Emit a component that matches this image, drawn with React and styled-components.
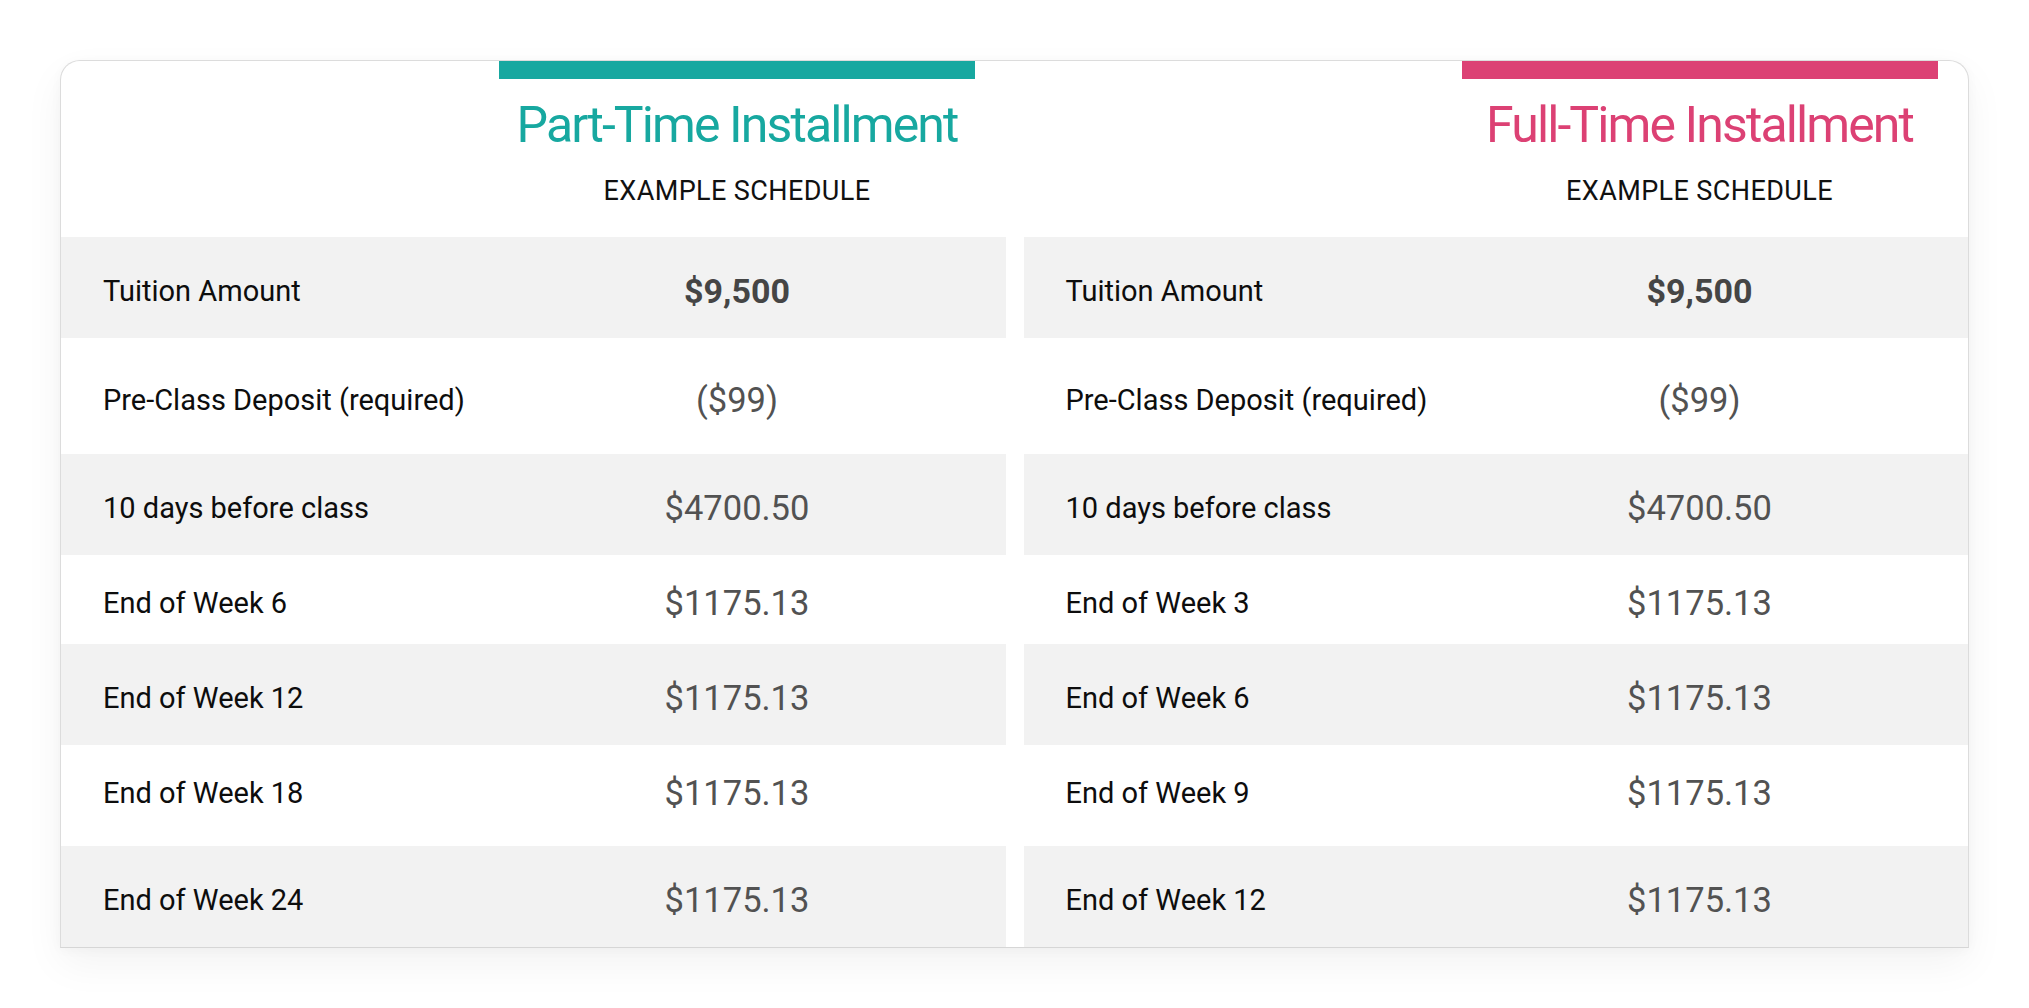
import React from "react";
import styled, { createGlobalStyle } from "styled-components";

const GlobalStyle = createGlobalStyle`
  html, body {
    margin: 0;
    padding: 0;
    background: #ffffff;
    font-family: Roboto, "Liberation Sans", sans-serif;
  }
`;

const Page = styled.div`
  width: 2029px;
  height: 1008px;
  box-sizing: border-box;
  padding: 60px 0 0 60px;
  background: #ffffff;
`;

const Card = styled.div`
  width: 1909px;
  box-sizing: border-box;
  display: grid;
  grid-template-columns: 1fr 1fr;
  column-gap: 18px;
  background: #ffffff;
  border: 1px solid #dcdcdc;
  border-bottom-color: #d6d6d6;
  border-radius: 20px 20px 0 0;
  box-shadow: 0 16px 40px rgba(0, 0, 0, 0.05), 0 2px 12px rgba(0, 0, 0, 0.03);
  overflow: hidden;
`;

const Panel = styled.div`
  display: flex;
  flex-direction: column;
`;

const Header = styled.div`
  display: grid;
  grid-template-columns: 438px 476px 1fr;
  height: 176px;
`;

const HeadCol = styled.div`
  grid-column: 2;
  display: flex;
  flex-direction: column;
  align-items: center;
`;

const Bar = styled.div`
  align-self: stretch;
  height: 18px;
  background: ${(p) => p.$color};
`;

const Title = styled.h2`
  margin: 21px 0 0;
  font-family: Roboto, "Liberation Sans", sans-serif;
  font-weight: 400;
  font-size: 50px;
  line-height: 50px;
  letter-spacing: -1.9px;
  color: ${(p) => p.$color};
  white-space: nowrap;
`;

const Subtitle = styled.div`
  margin-top: 27px;
  font-size: 27px;
  line-height: 28px;
  color: #111111;
  letter-spacing: 0.4px;
  white-space: nowrap;
`;

const Row = styled.div`
  display: grid;
  grid-template-columns: 438px 476px 1fr;
  align-items: center;
  box-sizing: border-box;
  height: ${(p) => p.$h}px;
  padding-top: ${(p) => p.$pt || 0}px;
  padding-bottom: ${(p) => p.$pb || 0}px;
  background: ${(p) => (p.$shaded ? "#f2f2f2" : "#ffffff")};
`;

const Label = styled.div`
  padding-left: 42px;
  font-size: 29px;
  color: #0d0d0d;
  white-space: nowrap;
`;

const Value = styled.div`
  text-align: center;
  font-size: ${(p) => (p.$bold ? 34 : 34.5)}px;
  font-weight: ${(p) => (p.$bold ? 700 : 400)};
  color: ${(p) => (p.$bold ? "#454545" : "#525252")};
  white-space: nowrap;
`;

const rowMetrics = [
  { h: 101, pt: 7 },
  { h: 116, pt: 8 },
  { h: 101, pt: 7 },
  { h: 89, pt: 7 },
  { h: 101, pt: 7 },
  { h: 101, pb: 5 },
  { h: 101, pt: 7 },
];

const plans = [
  {
    title: "Part-Time Installment",
    color: "#17a8a0",
    rows: [
      ["Tuition Amount", "$9,500", true],
      ["Pre-Class Deposit (required)", "($99)"],
      ["10 days before class", "$4700.50"],
      ["End of Week 6", "$1175.13"],
      ["End of Week 12", "$1175.13"],
      ["End of Week 18", "$1175.13"],
      ["End of Week 24", "$1175.13"],
    ],
  },
  {
    title: "Full-Time Installment",
    color: "#dc4174",
    rows: [
      ["Tuition Amount", "$9,500", true],
      ["Pre-Class Deposit (required)", "($99)"],
      ["10 days before class", "$4700.50"],
      ["End of Week 3", "$1175.13"],
      ["End of Week 6", "$1175.13"],
      ["End of Week 9", "$1175.13"],
      ["End of Week 12", "$1175.13"],
    ],
  },
];

export default function App() {
  return (
    <>
      <GlobalStyle />
      <Page>
        <Card>
          {plans.map((plan) => (
            <Panel key={plan.title}>
              <Header>
                <HeadCol>
                  <Bar $color={plan.color} />
                  <Title $color={plan.color}>{plan.title}</Title>
                  <Subtitle>EXAMPLE SCHEDULE</Subtitle>
                </HeadCol>
              </Header>
              {plan.rows.map(([label, value, bold], i) => (
                <Row
                  key={label}
                  $h={rowMetrics[i].h}
                  $pt={rowMetrics[i].pt}
                  $pb={rowMetrics[i].pb}
                  $shaded={i % 2 === 0}
                >
                  <Label>{label}</Label>
                  <Value $bold={bold}>{value}</Value>
                </Row>
              ))}
            </Panel>
          ))}
        </Card>
      </Page>
    </>
  );
}
